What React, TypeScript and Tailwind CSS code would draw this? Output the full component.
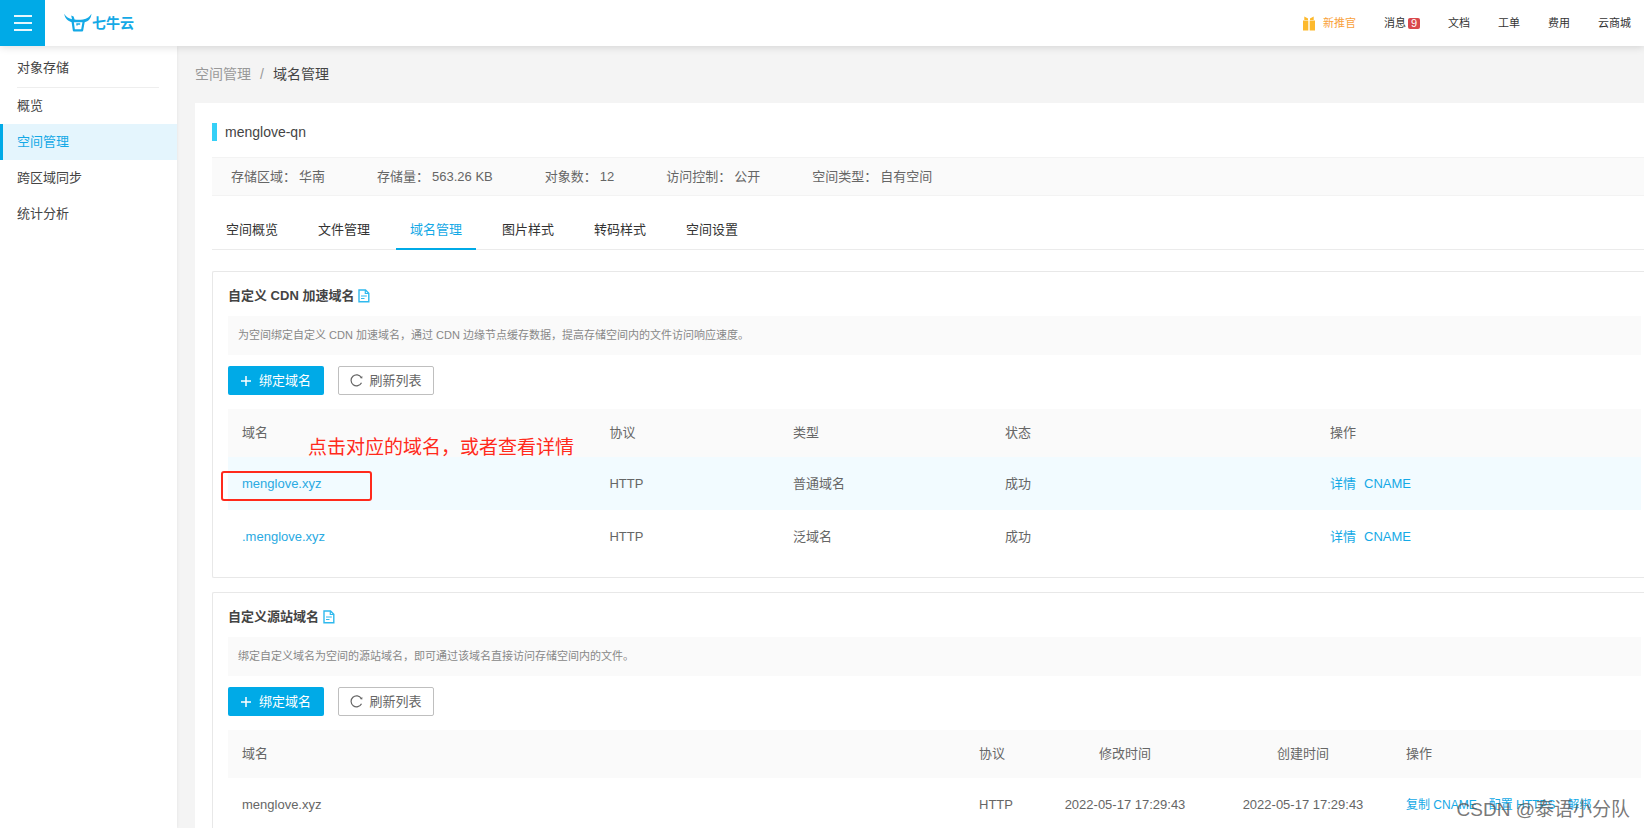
import type { ReactNode } from 'react';
import clsx from 'clsx';

const menus = ['概览', '空间管理', '跨区域同步', '统计分析'];

const bucketInfo = [
  { label: '存储区域：', value: '华南' },
  { label: '存储量：', value: '563.26 KB' },
  { label: '对象数：', value: '12' },
  { label: '访问控制：', value: '公开' },
  { label: '空间类型：', value: '自有空间' },
];

const tabs = ['空间概览', '文件管理', '域名管理', '图片样式', '转码样式', '空间设置'];

const cdnDomains = [
  { name: 'menglove.xyz', protocol: 'HTTP', type: '普通域名', status: '成功' },
  { name: '.menglove.xyz', protocol: 'HTTP', type: '泛域名', status: '成功' },
];

const sourceDomains = [
  {
    name: 'menglove.xyz',
    protocol: 'HTTP',
    updatedAt: '2022-05-17 17:29:43',
    createdAt: '2022-05-17 17:29:43',
  },
];

function Logo() {
  return (
    <a href="#" className="ml-[19px] flex items-center text-[#14a9e6]">
      <svg width="28" height="20" viewBox="0 0 28 20" fill="none" aria-hidden="true">
        <path
          d="M0.3 0.8C2 4.2 5 5.8 8 6.2L7.2 2.4L9.6 3.6L10.6 6.4C13 6.8 16 6.8 19 6.4C23 5.8 26 3.800 27.400 0.800C27.200 5.600 24.500 8.600 20.600 9.200L19.600 9.300H8.800C4 8.700 0.800 5.400 0.300 0.800Z"
          fill="currentColor"
        />
        <path d="M8.400 7L9.900 17.400H18.100L19.700 8.400" stroke="currentColor" strokeWidth="2.200" strokeLinejoin="round" />
        <path d="M13 12.500V11H16.200" stroke="currentColor" strokeWidth="1.400" />
      </svg>
      <span className="text-sm leading-5 font-bold">七牛云</span>
    </a>
  );
}

function GiftIcon() {
  return (
    <svg width="12" height="15" viewBox="0 0 12 15" fill="#fdb92c" aria-hidden="true">
      <path d="M1.300 0.400L5 2.600V4H1.300ZM10.700 0.400L7 2.600V4H10.700Z" />
      <path d="M0 4.600H5.300V14.600H0ZM6.700 4.600H12V14.600H6.700Z" />
    </svg>
  );
}

function DocIcon() {
  return (
    <svg width="12" height="14" viewBox="0 0 12 14" fill="none" stroke="#2fb9ee" aria-hidden="true">
      <path d="M1 1H7.500L10.800 4.300V12.700H1Z" strokeWidth="1.400" />
      <path d="M7.300 1V4.500H10.800" strokeWidth="1.200" />
      <path d="M3 7H8.800M3 9.500H6.500" />
    </svg>
  );
}

function PlusIcon() {
  return (
    <svg width="10" height="10" viewBox="0 0 10 10" stroke="currentColor" strokeWidth="1.500" aria-hidden="true">
      <path d="M5 0V10M0 5H10" />
    </svg>
  );
}

function ReloadIcon() {
  return (
    <svg width="13" height="13" viewBox="0 0 13 13" fill="none" stroke="currentColor" aria-hidden="true">
      <path d="M11.300 3.500A5.500 5.500 0 1 0 11.500 8.800" strokeWidth="1.200" />
      <path d="M12.300 1.900V4.500L9.800 4.100Z" fill="currentColor" stroke="none" />
    </svg>
  );
}

function Header() {
  return (
    <header className="relative z-10 flex h-[46px] shrink-0 items-center bg-white shadow-[0_1px_8px_rgba(0,0,0,0.14)]">
      <button
        type="button"
        aria-label="菜单"
        className="flex h-full w-[45px] flex-col items-center justify-center gap-[5px] bg-[#00aae7]"
      >
        <span className="h-[2px] w-[18px] bg-white/90" />
        <span className="h-[2px] w-[18px] bg-white/90" />
        <span className="h-[2px] w-[18px] bg-white/90" />
      </button>
      <Logo />
      <nav className="ml-auto flex items-center gap-7 pr-[13px] text-[11px] leading-4 whitespace-nowrap text-[#333]">
        <a href="#" className="flex items-center gap-2 text-[#f9a13a]">
          <GiftIcon />
          新推官
        </a>
        <a href="#" className="flex items-center gap-[2px]">
          消息
          <span className="w-3 rounded-[2px] bg-[#d9484c] text-center leading-[11px] text-white">9</span>
        </a>
        <a href="#">文档</a>
        <a href="#">工单</a>
        <a href="#">费用</a>
        <a href="#">云商城</a>
      </nav>
    </header>
  );
}

function Sidebar() {
  return (
    <aside className="w-[177px] shrink-0 bg-white text-[13px] text-[#444] shadow-[0_0_3px_rgba(0,0,0,0.08)]">
      <h2 className="mr-[18px] ml-[17px] border-b border-[#eee] pt-[2px] leading-[39px]">对象存储</h2>
      <nav className="flex flex-col">
        {menus.map((menu) => (
          <a
            key={menu}
            href="#"
            className={clsx(
              'border-l-[3px] pl-[14px] leading-9',
              menu === '空间管理' ? 'border-[#00aae7] bg-[#e4f5fd] text-[#14a9e6]' : 'border-transparent'
            )}
          >
            {menu}
          </a>
        ))}
      </nav>
    </aside>
  );
}

function Section({ title, tip, children }: { title: string; tip: string; children: ReactNode }) {
  return (
    <section className="rounded-l-[2px] border-y border-l border-[#e8e8e8] pr-[3px] pl-[15px]">
      <div className="flex items-center gap-1 pt-[14px] pb-[10px]">
        <h3 className="text-[13px] leading-5 font-bold text-[#444]">{title}</h3>
        <a href="#" aria-label="文档">
          <DocIcon />
        </a>
      </div>
      <p className="bg-[#fafafa] px-[10px] text-[11px] leading-[39px] text-[#888]">{tip}</p>
      <div className="mt-[11px] flex gap-[14px] text-[13px]">
        <button
          type="button"
          className="flex h-[29px] w-24 items-center justify-center gap-2 rounded-[2px] bg-[#00aae7] text-white"
        >
          <PlusIcon />
          绑定域名
        </button>
        <button
          type="button"
          className="flex h-[29px] w-24 items-center justify-center gap-[6px] rounded-[2px] border border-[#bfbfbf] bg-white text-[#666]"
        >
          <ReloadIcon />
          刷新列表
        </button>
      </div>
      {children}
    </section>
  );
}

function CdnTable() {
  return (
    <div className="relative mt-[14px] pb-[14px]">
      <table className="w-full table-fixed text-left text-[13px] leading-5 text-[#666]">
        <thead>
          <tr className="h-12 bg-[#fafafa]">
            <th className="w-[26%] px-[14px] font-normal">域名</th>
            <th className="w-[13%] px-[14px] font-normal">协议</th>
            <th className="w-[15%] px-[14px] font-normal">类型</th>
            <th className="w-[23%] px-[14px] font-normal">状态</th>
            <th className="w-[23%] px-[14px] font-normal">操作</th>
          </tr>
        </thead>
        <tbody>
          {cdnDomains.map((domain, i) => (
            <tr key={domain.name} className={clsx('h-[53px]', i === 0 && 'bg-[#f2fbff]')}>
              <td className="px-[14px]">
                <a href="#" className="text-[#2aaae2]">{domain.name}</a>
              </td>
              <td className="px-[14px]">{domain.protocol}</td>
              <td className="px-[14px]">{domain.type}</td>
              <td className="px-[14px]">{domain.status}</td>
              <td className="px-[14px]">
                <div className="flex gap-2 text-[#14a9e6]">
                  <a href="#">详情</a>
                  <a href="#">CNAME</a>
                </div>
              </td>
            </tr>
          ))}
        </tbody>
      </table>
      <p className="absolute top-[27px] left-20 text-[19px] leading-6 whitespace-nowrap text-[#ff2a1c]">
        点击对应的域名，或者查看详情
      </p>
      <div className="absolute top-[62px] -left-[7px] h-[30px] w-[151px] rounded-[3px] border-2 border-[#ff2a1c]" />
    </div>
  );
}

function SourceTable() {
  return (
    <table className="mt-[14px] w-full table-fixed text-left text-[13px] leading-5 text-[#666]">
      <thead>
        <tr className="h-12 bg-[#fafafa]">
          <th className="px-[14px] font-normal">域名</th>
          <th className="w-[71px] px-[14px] font-normal">协议</th>
          <th className="w-[178px] px-[14px] text-center font-normal">修改时间</th>
          <th className="w-[178px] px-[14px] text-center font-normal">创建时间</th>
          <th className="w-[249px] px-[14px] font-normal">操作</th>
        </tr>
      </thead>
      <tbody>
        {sourceDomains.map((domain) => (
          <tr key={domain.name} className="h-[53px]">
            <td className="px-[14px]">{domain.name}</td>
            <td className="px-[14px]">{domain.protocol}</td>
            <td className="px-[14px] text-center">{domain.updatedAt}</td>
            <td className="px-[14px] text-center">{domain.createdAt}</td>
            <td className="px-[14px]">
              <div className="flex gap-3 text-xs leading-5 whitespace-nowrap text-[#14a9e6]">
                <a href="#">复制 CNAME</a>
                <a href="#">配置 HTTPS</a>
                <a href="#">解绑</a>
              </div>
            </td>
          </tr>
        ))}
      </tbody>
    </table>
  );
}

export default function App() {
  return (
    <div className="relative flex h-screen flex-col overflow-hidden bg-[#f4f4f4] font-['Liberation_Sans','Noto_Sans_CJK_SC',sans-serif]">
      <Header />
      <div className="flex min-h-0 flex-1">
        <Sidebar />
        <main className="min-w-0 flex-1 overflow-hidden pl-[18px]">
          <div className="flex gap-[9px] pt-[18px] pb-[19px] text-sm leading-5 text-[#999]">
            <a href="#">空间管理</a>
            <span>/</span>
            <span className="text-[#444]">域名管理</span>
          </div>
          <div className="min-h-full bg-white pt-5 pl-[17px]">
            <h1 className="flex items-center gap-2 text-sm leading-[18px] text-[#444]">
              <span className="h-[18px] w-[5px] bg-[#35d0f7]" />
              menglove-qn
            </h1>
            <dl className="mt-4 flex gap-[52px] border-y border-[#f3f3f3] bg-[#fafafa] px-[19px] text-[13px] leading-[37px] whitespace-nowrap text-[#666]">
              {bucketInfo.map((info) => (
                <div key={info.label} className="flex gap-[3px]">
                  <dt>{info.label}</dt>
                  <dd>{info.value}</dd>
                </div>
              ))}
            </dl>
            <nav className="mt-4 mb-[21px] flex gap-3 border-b border-[#ebebeb] text-[13px] text-[#333]">
              {tabs.map((tab) => (
                <a
                  key={tab}
                  href="#"
                  className={clsx(
                    '-mb-px border-b-2 px-[14px] leading-9',
                    tab === '域名管理' ? 'border-[#00aae7] text-[#14a9e6]' : 'border-transparent'
                  )}
                >
                  {tab}
                </a>
              ))}
            </nav>
            <div className="flex flex-col gap-[14px]">
              <Section
                title="自定义 CDN 加速域名"
                tip="为空间绑定自定义 CDN 加速域名，通过 CDN 边缘节点缓存数据，提高存储空间内的文件访问响应速度。"
              >
                <CdnTable />
              </Section>
              <Section
                title="自定义源站域名"
                tip="绑定自定义域名为空间的源站域名，即可通过该域名直接访问存储空间内的文件。"
              >
                <SourceTable />
              </Section>
            </div>
          </div>
        </main>
      </div>
      <div className="pointer-events-none absolute right-[14px] bottom-1 text-[19px] leading-7 text-[#555]/80">
        CSDN @泰语小分队
      </div>
    </div>
  );
}
